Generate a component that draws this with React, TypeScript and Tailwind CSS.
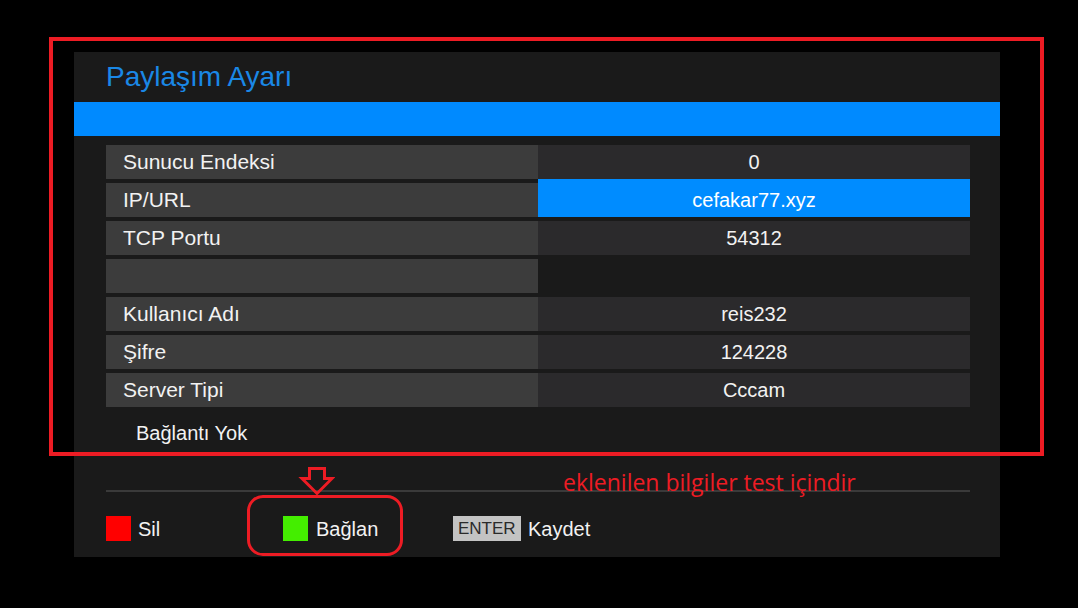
import React from "react";

type Row = { label: string; value: string; selected?: boolean; blank?: boolean };

const rows: Row[] = [
  { label: "Sunucu Endeksi", value: "0" },
  { label: "IP/URL", value: "cefakar77.xyz", selected: true },
  { label: "TCP Portu", value: "54312" },
  { label: "", value: "", blank: true },
  { label: "Kullanıcı Adı", value: "reis232" },
  { label: "Şifre", value: "124228" },
  { label: "Server Tipi", value: "Cccam" },
];

const ui = { fontFamily: '"Liberation Sans", Arial, sans-serif' };

function SettingRow({ row }: { row: Row }) {
  return (
    <div className="flex h-[34px]">
      <div className="w-[432px] bg-[#3c3c3c] pl-[17px] text-[21px] leading-[34px] text-[#f2f2f2]">
        {row.label}
      </div>
      <div
        className={
          row.selected
            ? "-mt-1 h-[38px] w-[432px] bg-[#008cff] pt-1 text-center text-[20px] leading-[34px] text-white"
            : row.blank
            ? "w-[432px] bg-[#1a1a1a]"
            : "w-[432px] bg-[#2b2a2c] text-center text-[20px] leading-[34px] text-[#f2f2f2]"
        }
      >
        {row.value}
      </div>
    </div>
  );
}

function DownArrow() {
  return (
    <svg width="38" height="32" viewBox="0 0 38 32" className="absolute left-[297px] top-[465px]">
      <polygon
        points="12.5,3.5 27.5,3.5 27.5,13.5 35,13.5 20,28.5 5,13.5 12.5,13.5"
        fill="none"
        stroke="#ed1c24"
        strokeWidth="3"
        strokeLinejoin="miter"
      />
    </svg>
  );
}

export default function App() {
  return (
    <div className="relative h-[608px] w-[1078px] overflow-hidden bg-black" style={ui}>
      <div className="pl-[74px] pt-[52px]">
        <div className="flex h-[505px] w-[926px] flex-col bg-[#1a1a1a]">
          <div className="h-[50px] pl-[32px] pt-[9px]">
            <h1 className="text-[28px] leading-[32px] text-[#1a88e6]">Paylaşım Ayarı</h1>
          </div>
          <div className="h-[34px] bg-[#008aff]" />

          <div className="pl-[32px] pr-[30px] pt-[9px]">
            <div className="flex flex-col gap-1">
              {rows.map((r, i) => (
                <SettingRow key={i} row={r} />
              ))}
            </div>

            <div className="mt-[15px] pl-[30px] text-[20px] leading-[22px] text-[#f2f2f2]">Bağlantı Yok</div>

            <div className="mt-[46px] h-[2px] bg-[#3a3a3a]" />

            <div className="mt-[24px] flex h-[25px] items-center text-[20px] text-[#f2f2f2]">
              <div className="flex w-[177px] items-center gap-[7px]">
                <span className="h-[25px] w-[25px] bg-[#ff0000]" />
                <span>Sil</span>
              </div>
              <div className="flex w-[170px] items-center gap-[8px]">
                <span className="h-[25px] w-[25px] bg-[#44ee00]" />
                <span>Bağlan</span>
              </div>
              <div className="flex items-center gap-[7px]">
                <span className="h-[25px] w-[68px] bg-[#c3c3c3] pl-[5px] text-[17px] leading-[25px] text-[#2a2a2a]">
                  ENTER
                </span>
                <span>Kaydet</span>
              </div>
            </div>
          </div>
        </div>
      </div>

      {/* annotation overlay */}
      <div className="pointer-events-none absolute left-[49px] top-[37px] h-[419px] w-[995px] border-4 border-[#ed1c24]" />
      <div className="pointer-events-none absolute left-[247px] top-[495px] h-[61px] w-[156px] rounded-[16px] border-[3px] border-[#ed1c24]" />
      <DownArrow />
      <div
        className="absolute left-[563px] top-[471px] text-[23px] leading-[23px] text-[#ed1c24]"
        style={{ fontFamily: '"Open Sans", "Noto Sans", sans-serif' }}
      >
        eklenilen bilgiler test içindir
      </div>
    </div>
  );
}
